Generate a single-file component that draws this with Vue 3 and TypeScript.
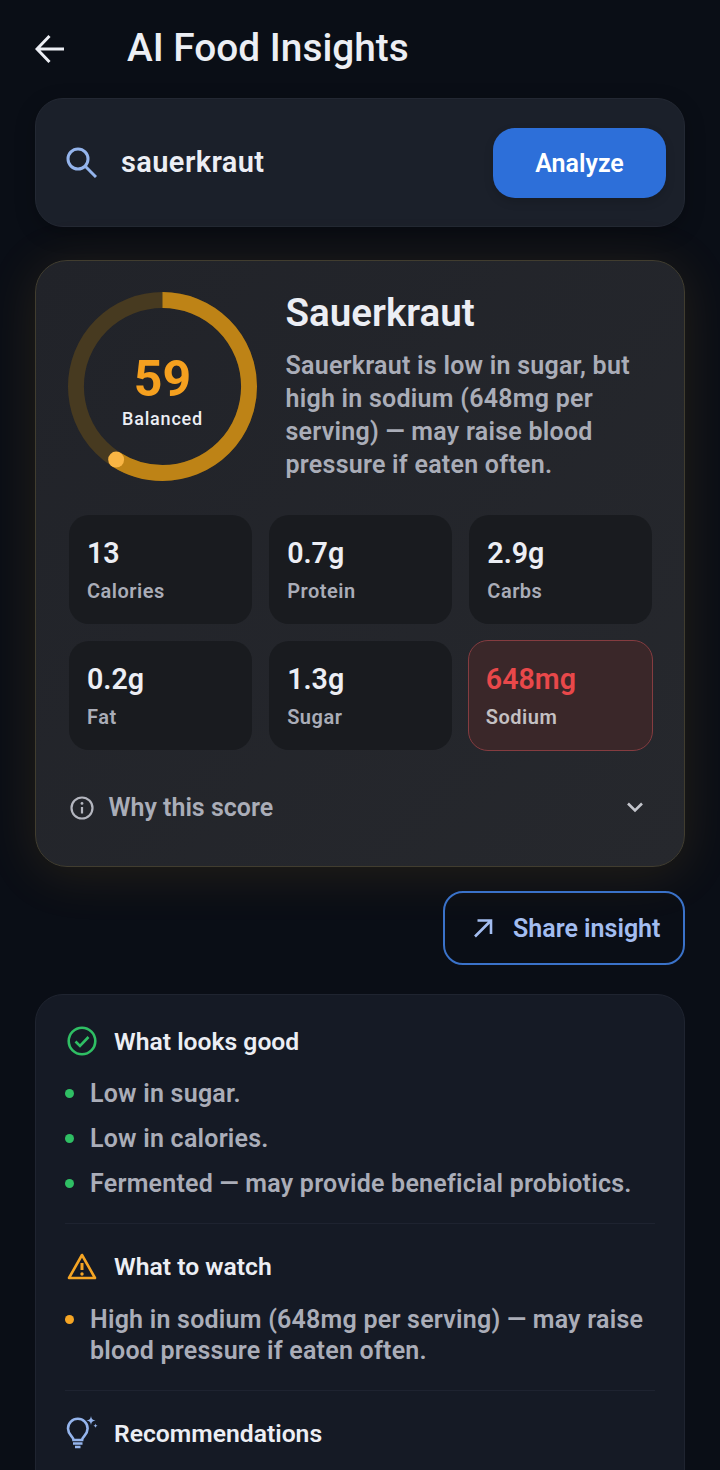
<template>
  <div class="page">
    <header class="top">
      <button class="back" aria-label="Back">
        <svg width="30" height="30" viewBox="0 0 30 30" fill="none" stroke="#eceef4" stroke-width="3">
          <path d="M29 15H3M14.500 2 2 15l12.500 13" />
        </svg>
      </button>
      <h1>AI Food Insights</h1>
    </header>

    <section class="search">
      <svg class="search-icon" width="31" height="31" viewBox="0 0 31 31" fill="none" stroke="#94b4ec" stroke-width="3">
        <circle cx="12" cy="12" r="10" />
        <path d="m19 19 11 11" />
      </svg>
      <span class="query">sauerkraut</span>
      <button class="analyze">Analyze</button>
    </section>

    <section class="score-card">
      <div class="summary">
        <div class="ring">
          <svg width="189" height="189" viewBox="0 0 190 190" fill="none">
            <circle cx="95" cy="95" r="87" stroke="#473a20" stroke-width="16" />
            <circle
              cx="95"
              cy="95"
              r="87"
              stroke="#be8316"
              stroke-width="16"
              :stroke-dasharray="`${arc} ${circumference}`"
              transform="rotate(-90 95 95)"
            />
            <circle class="tip" :cx="tip.x" :cy="tip.y" r="8" fill="#f9b544" />
          </svg>
          <div class="ring-text">
            <strong>{{ score }}</strong>
            <span>Balanced</span>
          </div>
        </div>
        <div class="intro">
          <h2>Sauerkraut</h2>
          <p>Sauerkraut is low in sugar, but high in sodium (648mg per serving) — may raise blood pressure if eaten often.</p>
        </div>
      </div>

      <div class="stats">
        <div v-for="s in stats" :key="s.label" class="stat" :class="{ alert: s.alert }">
          <b>{{ s.value }}</b>
          <span>{{ s.label }}</span>
        </div>
      </div>

      <div class="why">
        <svg width="26" height="26" viewBox="0 0 26 26" fill="none" stroke="#b4b6bf" stroke-width="2.2">
          <circle cx="13" cy="13" r="10.5" />
          <path d="M13 12v6.500" />
          <circle cx="13" cy="8.400" r="1.400" fill="#b4b6bf" stroke="none" />
        </svg>
        <span>Why this score</span>
        <svg class="chev" width="20" height="20" viewBox="0 0 20 20" fill="none" stroke="#c3c5cc" stroke-width="2.600">
          <path d="m3 5.500 7 7 7-7" />
        </svg>
      </div>
    </section>

    <div class="share-row">
      <button class="share">
        <svg width="20" height="20" viewBox="0 0 20 20" fill="none" stroke="#a3bdf0" stroke-width="2.600">
          <path d="M2 18.500 17 3.500M4.500 2.500h13.500v13.500" />
        </svg>
        <span>Share insight</span>
      </button>
    </div>

    <section class="details">
      <div class="block">
        <h3>
          <svg width="30" height="30" viewBox="0 0 30 30" fill="none" stroke="#2fbf64" stroke-width="2.600">
            <circle cx="15" cy="15" r="13.300" />
            <path d="m8.500 15.500 4.500 4.500 8.500-9" />
          </svg>
          What looks good
        </h3>
        <ul class="good">
          <li v-for="g in good" :key="g">{{ g }}</li>
        </ul>
      </div>

      <div class="block">
        <h3>
          <svg width="30" height="30" viewBox="0 0 30 30" fill="none" stroke="#f5a524" stroke-width="2.600">
            <path d="M15 4 28 27H2Z" stroke-linejoin="round" />
            <path d="M15 12v7" stroke-width="3" />
            <circle cx="15" cy="23" r="1.700" fill="#f5a524" stroke="none" />
          </svg>
          What to watch
        </h3>
        <ul class="watch">
          <li v-for="w in watch" :key="w">{{ w }}</li>
        </ul>
      </div>

      <div class="block">
        <h3>
          <svg width="34" height="34" viewBox="0 0 34 34" fill="none" stroke="#94b4ec" stroke-width="2.600">
            <path d="M7.500 24c0-3.500-5.500-5-5.500-11.500a9.800 9.800 0 0 1 19.600 0c0 6.500-5.500 8-5.500 11.500Z" />
            <path d="M7 27.500h9.500M9 31h5.500" />
            <path d="M25 0c.5 3 1.500 4 4.500 4.500-3 .5-4 1.500-4.500 4.500-.5-3-1.500-4-4.500-4.500 3-.5 4-1.500 4.500-4.500Z" fill="#94b4ec" stroke="none" />
            <path d="M29.500 7.500c.3 1.500.7 1.900 2.200 2.200-1.500.3-1.900.7-2.200 2.200-.3-1.500-.7-1.900-2.200-2.200 1.500-.3 1.900-.7 2.200-2.200Z" fill="#94b4ec" stroke="none" />
          </svg>
          Recommendations
        </h3>
      </div>
    </section>
  </div>
</template>

<script setup lang="ts">
import { computed } from 'vue'

const score = 59
const radius = 87
const circumference = 2 * Math.PI * radius
const arc = computed(() => (circumference * score) / 100)

// end of the progress arc, measured clockwise from 12 o'clock
const tip = computed(() => {
  const a = (score / 100) * 2 * Math.PI
  return { x: 95 + radius * Math.sin(a), y: 95 - radius * Math.cos(a) }
})

const stats = [
  { value: '13', label: 'Calories' },
  { value: '0.7g', label: 'Protein' },
  { value: '2.9g', label: 'Carbs' },
  { value: '0.2g', label: 'Fat' },
  { value: '1.3g', label: 'Sugar' },
  { value: '648mg', label: 'Sodium', alert: true }
]

const good = [
  'Low in sugar.',
  'Low in calories.',
  'Fermented — may provide beneficial probiotics.'
]

const watch = ['High in sodium (648mg per serving) — may raise blood pressure if eaten often.']
</script>

<style>
html, body { background: #0a0d14; }
</style>

<style scoped>
.page {
  width: 720px;
  height: 1470px;
  overflow: hidden;
  box-sizing: border-box;
  padding: 0 35px;
  background: #0a0e16;
  font-family: Roboto, "Noto Sans", sans-serif;
  color: #eceef4;
}
.top { display: flex; align-items: center; height: 98px; }
.back { background: none; border: 0; padding: 0; display: flex; width: 92px; }
h1 { margin: -4px 0 0; font-size: 38.8px; font-weight: 500; color: #eceef4; }

.search {
  height: 129px;
  box-sizing: border-box;
  display: flex;
  align-items: center;
  padding: 0 18px 0 30px;
  background: #1b202a;
  border: 1px solid #232833;
  border-radius: 28px;
  box-shadow: 0 6px 20px rgba(0, 0, 0, .25);
}
.search-icon { flex: none; }
.query { margin: -2px 0 0 24px; font-size: 29px; font-weight: 600; letter-spacing: .4px; flex: 1; }
.analyze {
  width: 173px;
  height: 70px;
  border: 0;
  padding: 2px 0 0;
  border-radius: 22px;
  background: #2d6fd9;
  color: #fff;
  font: 600 25px Roboto, sans-serif;
  box-shadow: 0 4px 10px rgba(0, 0, 0, .15);
}

.score-card {
  margin-top: 33px;
  height: 607px;
  box-sizing: border-box;
  padding: 31px 32px 0 32.5px;
  border: 1.5px solid #413d2f;
  border-radius: 32px;
  background: linear-gradient(135deg, #212329, #26282d);
  box-shadow: 0 6px 50px 4px rgba(245, 165, 36, .1);
}
.summary { display: flex; gap: 28.5px; }
.ring { position: relative; width: 189px; height: 189px; flex: none; margin-left: -.5px; }
.ring svg { display: block; }
.tip { filter: blur(.8px); }
.ring-text {
  position: absolute;
  inset: 10px 0 0;
  display: flex;
  flex-direction: column;
  align-items: center;
  justify-content: center;
}
.ring-text strong { font-size: 50px; line-height: 54px; font-weight: 700; color: #f5a01f; }
.ring-text span { font-size: 18px; line-height: 26px; font-weight: 500; letter-spacing: .8px; color: #eceef4; }
.intro h2 { margin: 0; font-size: 38.6px; line-height: 42px; font-weight: 600; color: #eceef4; }
.intro p { margin: 15px 0 0; font-size: 25px; line-height: 33px; font-weight: 600; letter-spacing: .25px; color: #aaadb8; }

.stats {
  display: grid;
  grid-template-columns: repeat(3, 1fr);
  gap: 17px;
  margin-top: 34px;
}
.stat {
  height: 109px;
  box-sizing: border-box;
  padding: 21px 18.5px;
  border-radius: 20px;
  background: #191b1f;
  display: flex;
  flex-direction: column;
  gap: 8px;
}
.stat b { font-size: 28.6px; line-height: 34px; font-weight: 600; color: #eceef4; }
.stat span { font-size: 20px; line-height: 26px; font-weight: 600; letter-spacing: .5px; color: #aaadb8; }
.stat.alert {
  height: 111px;
  margin: -1px;
  padding: 20.5px 17px;
  background: #3a2729;
  border: 1.5px solid #853c40;
}
.stat.alert b { color: #e8484a; }
.stat.alert span { color: #c4c0c2; }

.why {
  display: flex;
  align-items: center;
  gap: 14px;
  margin-top: 43px;
  font-size: 25px;
  font-weight: 600;
  color: #aaadb8;
}
.why span { flex: 1; }
.chev { margin-right: 7px; }

.share-row { display: flex; justify-content: flex-end; margin-top: 24px; }
.share {
  width: 242px;
  height: 74px;
  box-sizing: border-box;
  display: flex;
  align-items: center;
  gap: 20px;
  padding: 0 0 0 28px;
  background: transparent;
  border: 2px solid #3a72c9;
  border-radius: 20px;
  color: #a3bdf0;
  font: 600 25px Roboto, sans-serif;
}

.details {
  margin-top: 29px;
  padding: 28px 29px 0;
  height: 600px;
  box-sizing: border-box;
  background: #151a25;
  border: 1px solid #1f2430;
  border-radius: 28px;
}
.block { padding-bottom: 24px; margin-bottom: 24px; border-bottom: 1px solid #1e2330; }
.block:last-child { border-bottom: 0; }
h3 {
  margin: 0;
  display: flex;
  align-items: center;
  gap: 17px;
  height: 36px;
  font-size: 24.7px;
  font-weight: 600;
  color: #eceef4;
}
h3 svg { flex: none; margin-left: 2px; }
.block:last-child h3 { gap: 14px; }
.block:last-child h3 svg { margin-left: 1px; }
ul { list-style: none; margin: 0; padding: 5px 0 0; }
.watch { padding-top: 6px; }
li {
  position: relative;
  padding-left: 25px;
  margin-top: 14px;
  font-size: 25px;
  line-height: 31px;
  font-weight: 600;
  letter-spacing: .23px;
  color: #aaadb8;
}
li::before {
  content: "";
  position: absolute;
  left: 0;
  top: 11px;
  width: 9px;
  height: 9px;
  border-radius: 50%;
}
.good li::before { background: #2fbf64; }
.watch li::before { background: #f5a524; }
</style>
